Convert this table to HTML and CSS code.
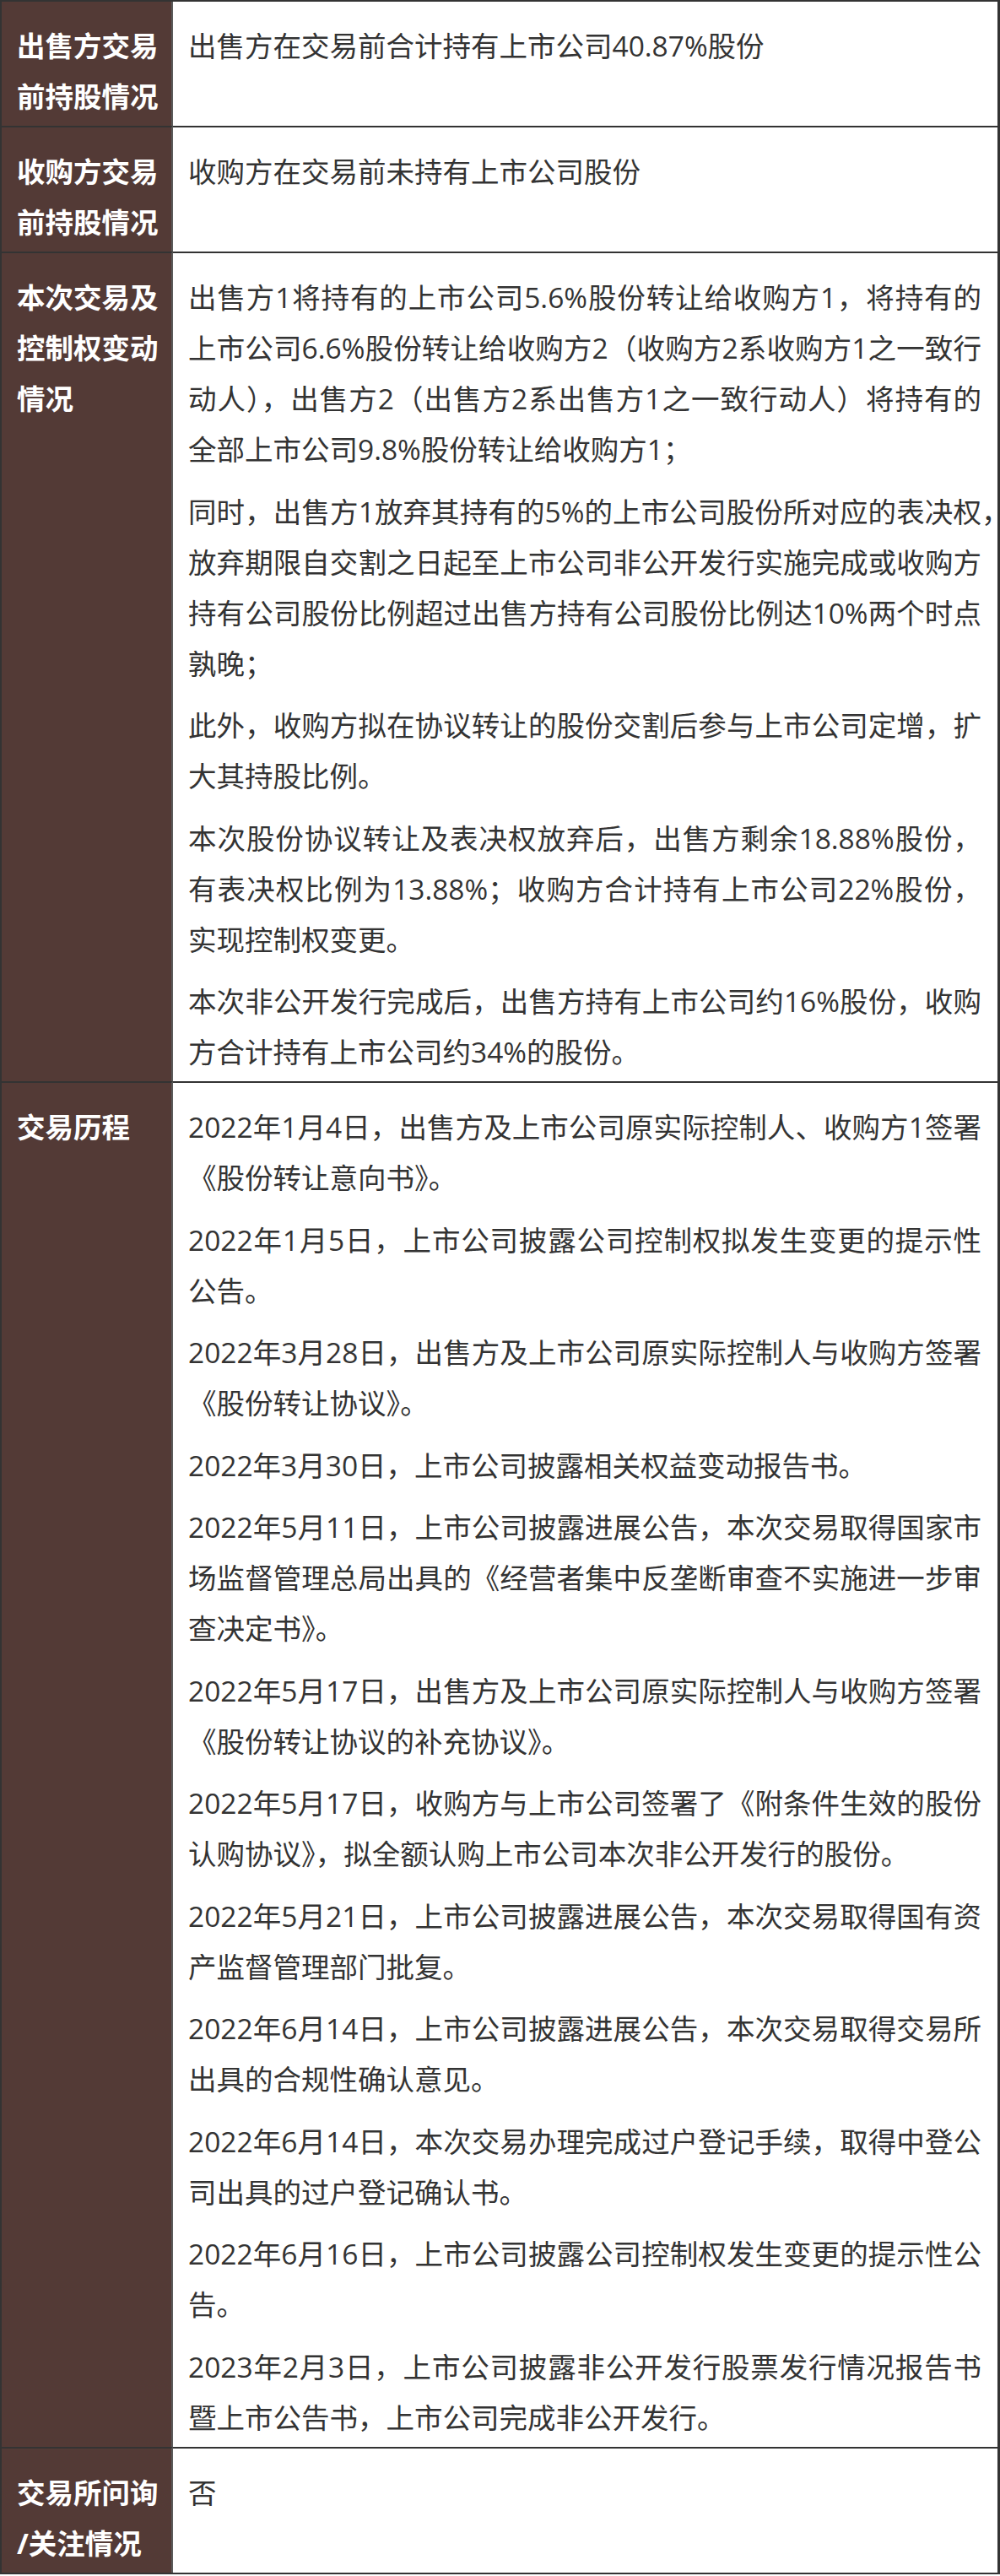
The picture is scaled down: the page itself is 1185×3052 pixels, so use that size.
FILE: index.html
```html
<!DOCTYPE html>
<html lang="zh-CN">
<head>
<meta charset="utf-8">
<title>交易概况</title>
<link rel="stylesheet" href="styles.css">
</head>
<body>
<table class="deal">
  <tbody>
    <tr>
      <th class="label">出售方交易前持股情况</th>
      <td class="content"><p>出售方在交易前合计持有上市公司40.87%股份</p></td>
    </tr>
    <tr>
      <th class="label">收购方交易前持股情况</th>
      <td class="content"><p>收购方在交易前未持有上市公司股份</p></td>
    </tr>
    <tr>
      <th class="label">本次交易及控制权变动情况</th>
      <td class="content">
        <p>出售方1将持有的上市公司5.6%股份转让给收购方1，将持有的上市公司6.6%股份转让给收购方2（收购方2系收购方1之一致行动人），出售方2（出售方2系出售方1之一致行动人）将持有的全部上市公司9.8%股份转让给收购方1；</p>
        <p>同时，出售方1放弃其持有的5%的上市公司股份所对应的表决权<span class="hang">，</span>放弃期限自交割之日起至上市公司非公开发行实施完成或收购方持有公司股份比例超过出售方持有公司股份比例达10%两个时点孰晚；</p>
        <p>此外，收购方拟在协议转让的股份交割后参与上市公司定增，扩大其持股比例。</p>
        <p>本次股份协议转让及表决权放弃后，出售方剩余18.88%股份，有表决权比例为13.88%；收购方合计持有上市公司22%股份，实现控制权变更。</p>
        <p>本次非公开发行完成后，出售方持有上市公司约16%股份，收购方合计持有上市公司约34%的股份。</p>
      </td>
    </tr>
    <tr>
      <th class="label">交易历程</th>
      <td class="content">
        <p>2022年1月4日，出售方及上市公司原实际控制人、收购方1签署《股份转让意向书》。</p>
        <p>2022年1月5日，上市公司披露公司控制权拟发生变更的提示性公告。</p>
        <p>2022年3月28日，出售方及上市公司原实际控制人与收购方签署《股份转让协议》。</p>
        <p>2022年3月30日，上市公司披露相关权益变动报告书。</p>
        <p>2022年5月11日，上市公司披露进展公告，本次交易取得国家市场监督管理总局出具的《经营者集中反垄断审查不实施进一步审查决定书》。</p>
        <p>2022年5月17日，出售方及上市公司原实际控制人与收购方签署《股份转让协议的补充协议》。</p>
        <p>2022年5月17日，收购方与上市公司签署了《附条件生效的股份认购协议》，拟全额认购上市公司本次非公开发行的股份。</p>
        <p>2022年5月21日，上市公司披露进展公告，本次交易取得国有资产监督管理部门批复。</p>
        <p>2022年6月14日，上市公司披露进展公告，本次交易取得交易所出具的合规性确认意见。</p>
        <p>2022年6月14日，本次交易办理完成过户登记手续，取得中登公司出具的过户登记确认书。</p>
        <p>2022年6月16日，上市公司披露公司控制权发生变更的提示性公告。</p>
        <p>2023年2月3日，上市公司披露非公开发行股票发行情况报告书暨上市公告书，上市公司完成非公开发行。</p>
      </td>
    </tr>
    <tr>
      <th class="label">交易所问询<br>/关注情况</th>
      <td class="content"><p>否</p></td>
    </tr>
  </tbody>
</table>
</body>
</html>
```

FILE: styles.css
```css
html, body {
  margin: 0;
  padding: 0;
  background: #ffffff;
}

.deal {
  width: 1185px;
  table-layout: fixed;
  border-collapse: separate;
  border-spacing: 0;
  border-top: 2px solid #333333;
  border-left: 2px solid #333333;
  border-right: 3px solid #333333;
  border-bottom: 2px solid #333333;
  font-family: "Open Sans", "Noto Sans CJK SC", sans-serif;
  font-size: 33.5px;
  line-height: 60px;
}

.deal th,
.deal td {
  box-sizing: border-box;
  vertical-align: top;
  padding: 22px 19px 5px 18px;
}

.deal tr + tr > th,
.deal tr + tr > td {
  border-top: 2px solid #333333;
}

.deal .label {
  width: 203px;
  padding-right: 6px;
  background: #533a36;
  color: #ffffff;
  font-weight: 700;
  text-align: left;
  border-right: 2px solid #5a5a5a;
}

.deal .content {
  color: #333333;
  text-align: justify;
}

.content p {
  margin: 0;
}

.content p + p {
  margin-top: 13.5px;
}

/* end-of-line punctuation that hangs into the cell padding */
.hang {
  letter-spacing: -1em;
}
```
